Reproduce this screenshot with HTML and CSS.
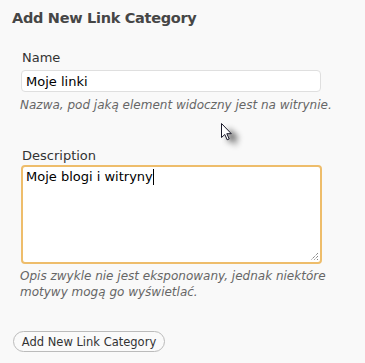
FILE: index.html
```html
<!DOCTYPE html>
<html>
<head>
<meta charset="utf-8">
<link rel="stylesheet" href="styles.css">
</head>
<body>
<div class="wrap">
  <h3 class="title">Add New Link Category</h3>
  <form class="form">
    <div class="field">
      <label class="label" for="name">Name</label>
      <input class="input" id="name" type="text" value="Moje linki">
      <p class="hint">Nazwa, pod jaką element widoczny jest na witrynie.</p>
    </div>
    <div class="field field-desc">
      <label class="label label-desc" for="desc">Description</label>
      <div class="ta">Moje blogi i witryny<span class="caret"></span>
        <svg class="grip" width="9" height="9" viewBox="0 0 9 9"><path d="M8 1L1 8M8 4L4 8M8 7L7 8" stroke="#555" stroke-width="1" stroke-dasharray="1 1" fill="none"/></svg>
      </div>
      <p class="hint hint2">Opis zwykle nie jest eksponowany, jednak niektóre motywy mogą go wyświetlać.</p>
    </div>
    <button class="btn" type="button">Add New Link Category</button>
  </form>
  <svg class="cursor" width="30" height="34" viewBox="0 0 30 34">
    <defs><filter id="sh" x="-50%" y="-50%" width="200%" height="200%"><feGaussianBlur stdDeviation="3"/></filter></defs>
    <path d="M8 6 L8 21 L12 17.5 L14.5 23 L17 22 L14.5 16.5 L19.5 16.5 Z" fill="#000" opacity="0.6" filter="url(#sh)"/>
    <path d="M1.5 1.5 L1.5 15.5 L4.8 12.5 L7.2 17.8 L9.2 16.9 L6.8 11.7 L11.3 11.7 Z" fill="#fff" stroke="#1a1a2a" stroke-width="1" stroke-linejoin="miter"/>
  </svg>
</div>
</body>
</html>
```
FILE: styles.css
```css
html, body {
  margin: 0;
  padding: 0;
  background: #f9f9f9;
}
body {
  font-family: "DejaVu Sans", Verdana, sans-serif;
  color: #333;
}
.wrap {
  position: relative;
  width: 365px;
  height: 363px;
  overflow: hidden;
  padding: 8px 0 0 12px;
  box-sizing: border-box;
}
.title {
  margin: 0;
  font-size: 14.5px;
  font-weight: bold;
  color: #464646;
  line-height: 20px;
  letter-spacing: -0.3px;
}
.form {
  margin: 0;
  padding: 22px 0 0 9px;
}
.field {
  display: flex;
  flex-direction: column;
  align-items: flex-start;
}
.label {
  font-size: 13px;
  color: #333;
  line-height: 16px;
  margin-left: 1px;
}
.input {
  margin: 4px 0 0 0;
  width: 300px;
  height: 22px;
  box-sizing: border-box;
  border: 1px solid #dfdfdf;
  border-radius: 4px;
  background: #fff;
  font-family: "DejaVu Sans", Verdana, sans-serif;
  font-size: 13px;
  color: #000;
  padding: 0 4px;
  outline: none;
}
.hint {
  margin: 5px 0 0 -1px;
  font-size: 12px;
  font-style: italic;
  color: #666;
  line-height: 16px;
  width: 312px;
}
.field-desc {
  margin-top: 35px;
}
.ta {
  position: relative;
  margin-top: 1px;
  width: 301px;
  height: 99px;
  box-sizing: border-box;
  border: 2px solid #eebd6b;
  border-radius: 4px;
  background: #fff;
  font-size: 13px;
  color: #000;
  padding: 2px 3px;
  line-height: 16px;
}
.caret {
  display: inline-block;
  width: 1px;
  height: 16px;
  background: #000;
  vertical-align: -4px;
}
.grip {
  position: absolute;
  right: 1px;
  bottom: 1px;
}
.hint2 {
  margin-top: 4px;
}
.btn {
  margin: 31px 0 0 -8px;
  height: 21px;
  width: 152px;
  border: 1px solid #bbb;
  border-radius: 11px;
  background: #fafafa;
  font-family: "DejaVu Sans", Verdana, sans-serif;
  font-size: 11.5px;
  color: #333;
  padding: 0;
}
.cursor {
  position: absolute;
  left: 220px;
  top: 122px;
}
```
